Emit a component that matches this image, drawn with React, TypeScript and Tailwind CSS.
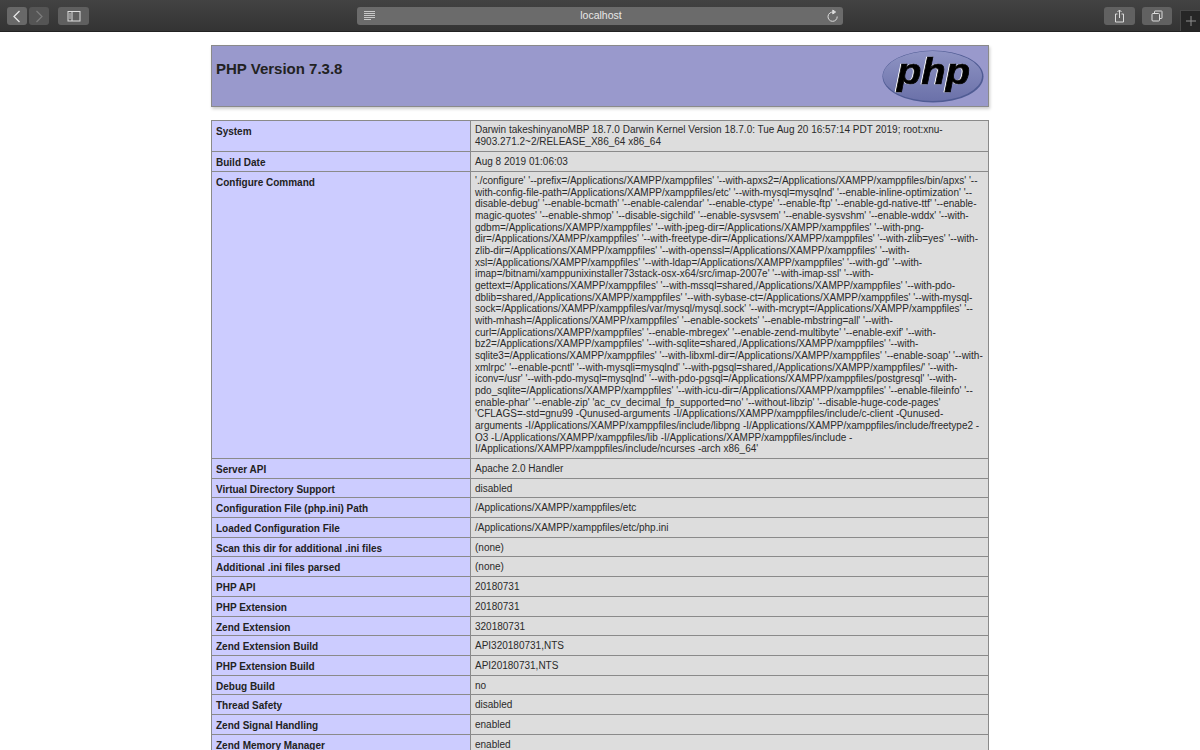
const lines = [
"'./configure' '--prefix=/Applications/XAMPP/xamppfiles' '--with-apxs2=/Applications/XAMPP/xamppfiles/bin/apxs' '--",
"with-config-file-path=/Applications/XAMPP/xamppfiles/etc' '--with-mysql=mysqlnd' '--enable-inline-optimization' '--",
"disable-debug' '--enable-bcmath' '--enable-calendar' '--enable-ctype' '--enable-ftp' '--enable-gd-native-ttf' '--enable-",
"magic-quotes' '--enable-shmop' '--disable-sigchild' '--enable-sysvsem' '--enable-sysvshm' '--enable-wddx' '--with-",
"gdbm=/Applications/XAMPP/xamppfiles' '--with-jpeg-dir=/Applications/XAMPP/xamppfiles' '--with-png-",
"dir=/Applications/XAMPP/xamppfiles' '--with-freetype-dir=/Applications/XAMPP/xamppfiles' '--with-zlib=yes' '--with-",
"zlib-dir=/Applications/XAMPP/xamppfiles' '--with-openssl=/Applications/XAMPP/xamppfiles' '--with-",
"xsl=/Applications/XAMPP/xamppfiles' '--with-ldap=/Applications/XAMPP/xamppfiles' '--with-gd' '--with-",
"imap=/bitnami/xamppunixinstaller73stack-osx-x64/src/imap-2007e' '--with-imap-ssl' '--with-",
"gettext=/Applications/XAMPP/xamppfiles' '--with-mssql=shared,/Applications/XAMPP/xamppfiles' '--with-pdo-",
"dblib=shared,/Applications/XAMPP/xamppfiles' '--with-sybase-ct=/Applications/XAMPP/xamppfiles' '--with-mysql-",
"sock=/Applications/XAMPP/xamppfiles/var/mysql/mysql.sock' '--with-mcrypt=/Applications/XAMPP/xamppfiles' '--",
"with-mhash=/Applications/XAMPP/xamppfiles' '--enable-sockets' '--enable-mbstring=all' '--with-",
"curl=/Applications/XAMPP/xamppfiles' '--enable-mbregex' '--enable-zend-multibyte' '--enable-exif' '--with-",
"bz2=/Applications/XAMPP/xamppfiles' '--with-sqlite=shared,/Applications/XAMPP/xamppfiles' '--with-",
"sqlite3=/Applications/XAMPP/xamppfiles' '--with-libxml-dir=/Applications/XAMPP/xamppfiles' '--enable-soap' '--with-",
"xmlrpc' '--enable-pcntl' '--with-mysqli=mysqlnd' '--with-pgsql=shared,/Applications/XAMPP/xamppfiles/' '--with-",
"iconv=/usr' '--with-pdo-mysql=mysqlnd' '--with-pdo-pgsql=/Applications/XAMPP/xamppfiles/postgresql' '--with-",
"pdo_sqlite=/Applications/XAMPP/xamppfiles' '--with-icu-dir=/Applications/XAMPP/xamppfiles' '--enable-fileinfo' '--",
"enable-phar' '--enable-zip' 'ac_cv_decimal_fp_supported=no' '--without-libzip' '--disable-huge-code-pages'",
"'CFLAGS=-std=gnu99 -Qunused-arguments -I/Applications/XAMPP/xamppfiles/include/c-client -Qunused-",
"arguments -I/Applications/XAMPP/xamppfiles/include/libpng -I/Applications/XAMPP/xamppfiles/include/freetype2 -",
"O3 -L/Applications/XAMPP/xamppfiles/lib -I/Applications/XAMPP/xamppfiles/include -",
"I/Applications/XAMPP/xamppfiles/include/ncurses -arch x86_64'",
];

const rows: [string, string][] = [
  ["Server API", "Apache 2.0 Handler"],
  ["Virtual Directory Support", "disabled"],
  ["Configuration File (php.ini) Path", "/Applications/XAMPP/xamppfiles/etc"],
  ["Loaded Configuration File", "/Applications/XAMPP/xamppfiles/etc/php.ini"],
  ["Scan this dir for additional .ini files", "(none)"],
  ["Additional .ini files parsed", "(none)"],
  ["PHP API", "20180731"],
  ["PHP Extension", "20180731"],
  ["Zend Extension", "320180731"],
  ["Zend Extension Build", "API320180731,NTS"],
  ["PHP Extension Build", "API20180731,NTS"],
  ["Debug Build", "no"],
  ["Thread Safety", "disabled"],
  ["Zend Signal Handling", "enabled"],
  ["Zend Memory Manager", "enabled"],
];

function Row({ label, h, top = "pt-[4px]", children }: { label: string; h: string; top?: string; children: React.ReactNode }) {
  return (
    <div className={`flex border-b border-[#8a8a8a] ${h}`}>
      <div className="w-[259px] shrink-0 border-r border-[#8a8a8a] bg-[#ccccff] pl-[4px] pt-[5px] text-[10px] font-bold leading-[11.67px] text-[#222]">{label}</div>
      <div className={`flex-1 bg-[#dddddd] pl-[4px] text-[10px] leading-[11.67px] text-[#2a2a2a] whitespace-nowrap ${top}`}>{children}</div>
    </div>
  );
}

const Btn = ({ className, children }: { className: string; children?: React.ReactNode }) => (
  <div className={`flex h-[18px] items-center justify-center rounded-[3px] ${className}`}>{children}</div>
);

export default function App() {
  return (
    <div className="relative h-[750px] w-[1200px] overflow-hidden bg-white font-['Liberation_Sans',Arial,sans-serif]">
      <div className="flex h-[32px] items-center border-b border-[#222] bg-gradient-to-b from-[#434343] to-[#333333] pt-[1px]">
        <div className="ml-[7px] flex gap-[2px]">
          <Btn className="w-[20px] bg-[#686868]">
            <svg width="10" height="13" viewBox="0 0 10 13" fill="none" stroke="#e6e6e6" strokeWidth="1.3"><path d="M7.500 1 L2 6.500 L7.500 12" /></svg>
          </Btn>
          <Btn className="w-[20px] bg-[#555555]">
            <svg width="10" height="13" viewBox="0 0 10 13" fill="none" stroke="#7d7d7d" strokeWidth="1.2"><path d="M2.500 1 L8 6.500 L2.500 12" /></svg>
          </Btn>
        </div>
        <Btn className="ml-[9px] w-[31px] bg-[#5f5f5f]">
          <svg width="14" height="11" viewBox="0 0 14 11" fill="none" stroke="#dedede" strokeWidth="1"><rect x="1" y=".5" width="12" height="9.500" /><path d="M5 .5V10" /><path d="M2 3h2M2 5h2M2 7h2" strokeWidth=".8" /></svg>
        </Btn>
        <Btn className="relative ml-[268px] w-[486px] bg-[#6b6b6b] pl-[2px]">
          <svg className="absolute left-[6px] top-[4px]" width="13" height="10" viewBox="0 0 13 10" stroke="#c9c9c9" strokeWidth="1"><path d="M1 .5h11M1 2.500h11M1 4.500h11M1 6.500h11M1 8.500h7" /></svg>
          <span className="text-[10.500px] text-[#e8e8e8]">localhost</span>
          <svg className="absolute right-[4px] top-[2px]" width="13" height="14" viewBox="0 0 13 14" fill="none" stroke="#dcdcdc" strokeWidth="1"><path d="M7.500 3.200A4.600 4.600 0 1 0 11.200 7.500" /><path d="M6.800 1 L9.600 3 L6.800 5Z" fill="#dcdcdc" /></svg>
        </Btn>
        <Btn className="ml-[261px] w-[31px] bg-[#616161]">
          <svg width="11" height="14" viewBox="0 0 11 14" fill="none" stroke="#dcdcdc" strokeWidth="1"><path d="M3.500 5H1.500V13H9.500V5H7.500M5.500 9V1M3.500 3 5.500 1 7.500 3" /></svg>
        </Btn>
        <Btn className="ml-[7px] w-[30px] bg-[#616161]">
          <svg width="12" height="12" viewBox="0 0 12 12" fill="none" stroke="#dcdcdc" strokeWidth="1"><rect x="1" y="3.500" width="7.500" height="7.500" rx="1" /><path d="M3.500 3.500V1.500A.5.5 0 0 1 4 1H10.500A.5.5 0 0 1 11 1.500V8A.5.5 0 0 1 10.500 8.500H8.500" /></svg>
        </Btn>
        <div className="ml-[8px] flex h-[21px] w-[20px] items-center justify-center self-end border-l border-t border-[#484848] bg-[#262626]">
          <svg width="10" height="10" viewBox="0 0 10 10" stroke="#8f8f8f" strokeWidth="1"><path d="M5 0v10M0 5h10" /></svg>
        </div>
      </div>

      <div className="mx-auto mt-[13px] flex h-[62px] w-[778px] justify-between border border-[#8a8a8a] bg-[#9999cc] pl-[4px] shadow-[1px_2px_3px_#ccc]">
        <h1 className="mt-[14px] text-[15px] font-bold leading-[17px] text-[#222]">PHP Version 7.3.8</h1>
        <svg className="mr-[4px] mt-[4px]" width="102" height="53" viewBox="0 0 102 53">
          <defs>
            <linearGradient id="phpFill" x1="0" y1="0" x2="0" y2="1">
              <stop offset="0" stopColor="#8f94c4" />
              <stop offset="1" stopColor="#6b71a9" />
            </linearGradient>
          </defs>
          <ellipse cx="51" cy="26.500" rx="50.500" ry="26" fill="#4f5b93" />
          <ellipse cx="50.500" cy="26" rx="49.500" ry="25" fill="url(#phpFill)" />
          <text x="15" y="34" textLength="73" lengthAdjust="spacingAndGlyphs" fontFamily="'Liberation Sans',Arial,sans-serif" fontStyle="italic" fontWeight="700" fontSize="37" fill="#000" stroke="#000" strokeWidth="0.7" className="drop-shadow-[-0.8px_0.8px_0_#fff]">php</text>
        </svg>
      </div>

      <div className="mx-auto mt-[13px] w-[778px] border-x border-t border-[#8a8a8a]">
        <Row label="System" h="h-[31px]" top="pt-[3px]">
          Darwin takeshinyanoMBP 18.7.0 Darwin Kernel Version 18.7.0: Tue Aug 20 16:57:14 PDT 2019; root:xnu-<br />4903.271.2~2/RELEASE_X86_64 x86_64
        </Row>
        <Row label="Build Date" h="h-[20px]">Aug 8 2019 01:06:03</Row>
        <Row label="Configure Command" h="h-[287px]" top="pt-[3px]">
          {lines.map((l) => <div key={l}>{l}</div>)}
        </Row>
        {rows.map(([a, b]) => (
          <Row key={a} label={a} h="h-[19.700px]">{b}</Row>
        ))}
      </div>
    </div>
  );
}
